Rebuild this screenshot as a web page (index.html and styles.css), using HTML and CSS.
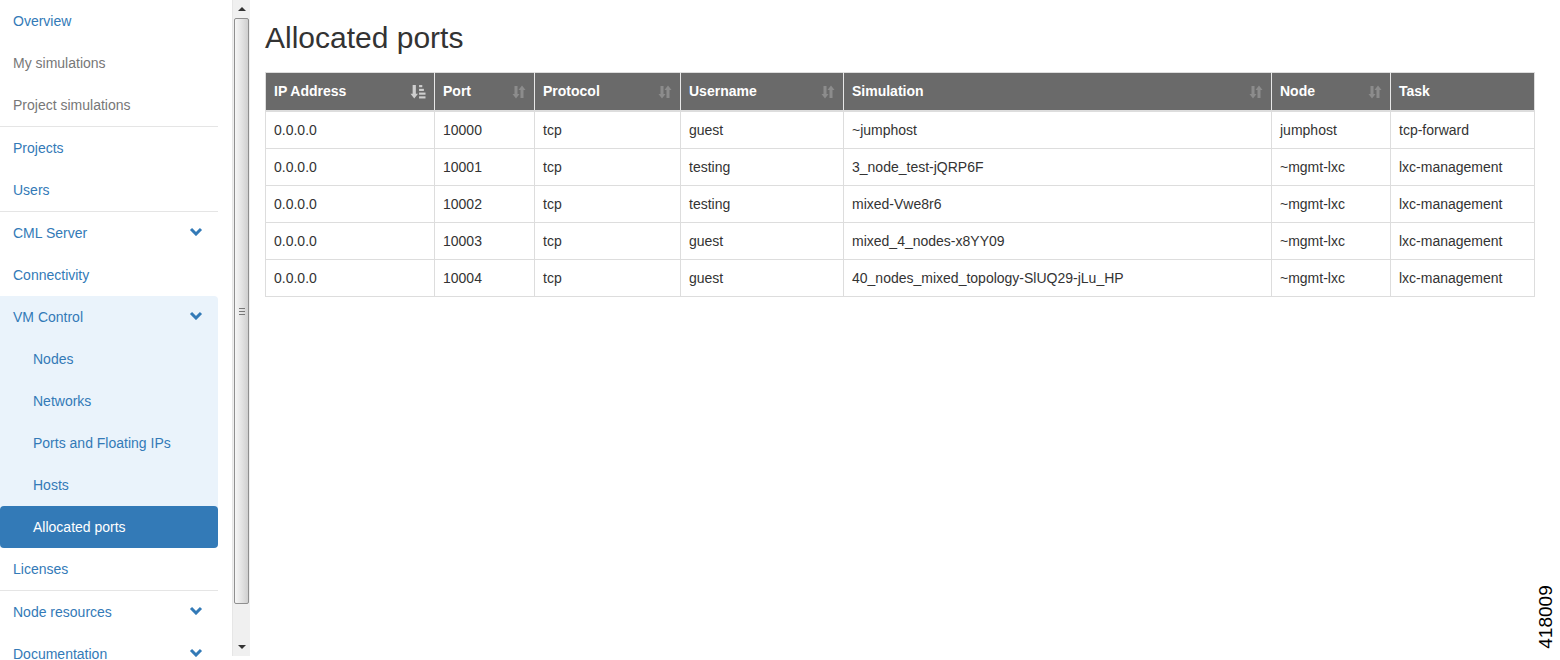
FILE: index.html
```html
<!DOCTYPE html>
<html lang="en">
<head>
  <meta charset="UTF-8" />
  <title>Allocated ports</title>
  <link rel="stylesheet" href="styles.css">
</head>
<body>
  <aside class="sidebar">
    <nav class="menu">
      <a class="item">Overview</a>
      <a class="item muted">My simulations</a>
      <a class="item muted">Project simulations</a>
      <div class="sep"></div>
      <a class="item">Projects</a>
      <a class="item">Users</a>
      <div class="sep"></div>
      <a class="item">CML Server
        <svg class="chev" viewBox="0 0 14 9"><polyline points="2,2 7,7 12,2" /></svg>
      </a>
      <a class="item">Connectivity</a>
      <div class="group">
        <a class="item">VM Control
          <svg class="chev" viewBox="0 0 14 9"><polyline points="2,2 7,7 12,2" /></svg>
        </a>
        <a class="item sub">Nodes</a>
        <a class="item sub">Networks</a>
        <a class="item sub">Ports and Floating IPs</a>
        <a class="item sub">Hosts</a>
        <a class="item sub active">Allocated ports</a>
      </div>
      <a class="item">Licenses</a>
      <div class="sep"></div>
      <a class="item">Node resources
        <svg class="chev" viewBox="0 0 14 9"><polyline points="2,2 7,7 12,2" /></svg>
      </a>
      <a class="item">Documentation
        <svg class="chev" viewBox="0 0 14 9"><polyline points="2,2 7,7 12,2" /></svg>
      </a>
    </nav>

    <div class="scrollbar">
      <div class="arrow up"></div>
      <div class="thumb"><span class="grip"></span></div>
      <div class="arrow down"></div>
    </div>
  </aside>

  <main class="content">
    <h1>Allocated ports</h1>

    <table class="ports">
      <thead>
        <tr>
          <th class="c-ip">IP Address
            <svg class="sort on" viewBox="0 0 14 14">
              <path d="M2 1h3v8h2l-3.5 4.5L0 9h2z" />
              <rect x="8" y="1" width="3" height="2" />
              <rect x="8" y="4.5" width="4.5" height="2" />
              <rect x="8" y="8" width="6" height="2" />
              <rect x="8" y="11.5" width="6" height="2" />
            </svg>
          </th>
          <th class="c-port">Port
            <svg class="sort" viewBox="0 0 14 14"><path d="M2.5 1h3v8h2L4 13.5 0.5 9h2zM8.5 13h3V5h2L10 0.5 6.5 5h2z" /></svg>
          </th>
          <th class="c-proto">Protocol
            <svg class="sort" viewBox="0 0 14 14"><path d="M2.5 1h3v8h2L4 13.5 0.5 9h2zM8.5 13h3V5h2L10 0.5 6.5 5h2z" /></svg>
          </th>
          <th class="c-user">Username
            <svg class="sort" viewBox="0 0 14 14"><path d="M2.5 1h3v8h2L4 13.5 0.5 9h2zM8.5 13h3V5h2L10 0.5 6.5 5h2z" /></svg>
          </th>
          <th class="c-sim">Simulation
            <svg class="sort" viewBox="0 0 14 14"><path d="M2.5 1h3v8h2L4 13.5 0.5 9h2zM8.5 13h3V5h2L10 0.5 6.5 5h2z" /></svg>
          </th>
          <th class="c-node">Node
            <svg class="sort" viewBox="0 0 14 14"><path d="M2.5 1h3v8h2L4 13.5 0.5 9h2zM8.5 13h3V5h2L10 0.5 6.5 5h2z" /></svg>
          </th>
          <th class="c-task">Task</th>
        </tr>
      </thead>
      <tbody>
        <tr><td>0.0.0.0</td><td>10000</td><td>tcp</td><td>guest</td><td>~jumphost</td><td>jumphost</td><td>tcp-forward</td></tr>
        <tr><td>0.0.0.0</td><td>10001</td><td>tcp</td><td>testing</td><td>3_node_test-jQRP6F</td><td>~mgmt-lxc</td><td>lxc-management</td></tr>
        <tr><td>0.0.0.0</td><td>10002</td><td>tcp</td><td>testing</td><td>mixed-Vwe8r6</td><td>~mgmt-lxc</td><td>lxc-management</td></tr>
        <tr><td>0.0.0.0</td><td>10003</td><td>tcp</td><td>guest</td><td>mixed_4_nodes-x8YY09</td><td>~mgmt-lxc</td><td>lxc-management</td></tr>
        <tr><td>0.0.0.0</td><td>10004</td><td>tcp</td><td>guest</td><td>40_nodes_mixed_topology-SlUQ29-jLu_HP</td><td>~mgmt-lxc</td><td>lxc-management</td></tr>
      </tbody>
    </table>
  </main>

  <div class="figno">418009</div>
</body>
</html>
```

FILE: styles.css
```css
html, body {
  height: 100%;
}

body {
  margin: 0;
  font-family: "Liberation Sans", Arial, sans-serif;
  font-size: 14px;
  color: #333;
  background: #fff;
  display: flex;
  overflow: hidden;
}

/* sidebar */

.sidebar {
  display: flex;
  width: 250px;
  height: 660px;
  flex-shrink: 0;
}

.menu {
  width: 218px;
  height: 660px;
  overflow: hidden;
  flex-shrink: 0;
}

.item {
  display: flex;
  align-items: center;
  justify-content: space-between;
  height: 42px;
  box-sizing: border-box;
  padding: 0 15px 0 13px;
  color: #337ab7;
  line-height: 20px;
}

.item.muted {
  color: #777;
}

.item.sub {
  padding-left: 33px;
}

.item.active {
  background: #337ab7;
  color: #fff;
  border-radius: 4px;
}

.sep {
  height: 1px;
  background: #e5e5e5;
}

.group {
  background: #eaf3fb;
  border-radius: 0 4px 4px 0;
}

.chev {
  width: 14px;
  height: 9px;
  margin-top: -3px;
}

.chev polyline {
  fill: none;
  stroke: #337ab7;
  stroke-width: 3;
}

.scrollbar {
  margin-left: 14px;
  width: 18px;
  height: 656px;
  background: #f0f0f0;
  border-left: 1px solid #e6e6e6;
  display: flex;
  flex-direction: column;
}

.arrow {
  height: 17px;
  position: relative;
}

.arrow::after {
  content: "";
  position: absolute;
  left: 5px;
  border-left: 4px solid transparent;
  border-right: 4px solid transparent;
}

.arrow.up::after {
  top: 7px;
  border-bottom: 4px solid #333;
}

.arrow.down::after {
  top: 6px;
  border-top: 4px solid #333;
}

.thumb {
  flex: 1;
  margin: 1px 1px 35px;
  border: 1px solid #8f8f8f;
  border-radius: 2px;
  background: linear-gradient(to right, #f6f6f6, #e2e2e2 55%, #cfcfcf);
  display: flex;
  align-items: center;
  justify-content: center;
}

.grip {
  width: 6px;
  height: 5px;
  border-top: 1px solid #777;
  border-bottom: 1px solid #777;
  position: relative;
}

.grip::after {
  content: "";
  position: absolute;
  left: 0;
  right: 0;
  top: 2px;
  border-top: 1px solid #777;
}

/* content */

.content {
  flex: 1;
  padding: 0 26px 0 15px;
}

h1 {
  margin: 21px 0 18px;
  font-size: 30px;
  font-weight: 500;
  line-height: 33px;
  color: #333;
}

.ports {
  width: 1269px;
  border-collapse: collapse;
  table-layout: fixed;
  border: 1px solid #ddd;
}

.ports th,
.ports td {
  box-sizing: border-box;
  text-align: left;
  padding: 8px 8px;
  line-height: 20px;
  white-space: nowrap;
}

.ports th {
  padding-bottom: 9px;
  background: #6a6a6a;
  color: #fff;
  font-weight: bold;
  border-left: 1px solid #e8e8e8;
  border-bottom: 2px solid #ddd;
  position: relative;
}

.ports th:first-child {
  border-left: none;
}

.ports td {
  border: 1px solid #ddd;
}

.sort {
  position: absolute;
  right: 8px;
  top: 12px;
  width: 14px;
  height: 14px;
  fill: #8c8c8c;
}

.sort.on {
  width: 16px;
  height: 15px;
  top: 11px;
  fill: #cfcfcf;
}

.c-ip { width: 169px; }
.c-port { width: 100px; }
.c-proto { width: 146px; }
.c-user { width: 163px; }
.c-sim { width: 428px; }
.c-node { width: 119px; }
.c-task { width: 144px; }

.figno {
  position: absolute;
  left: 1546px;
  top: 617px;
  transform: translate(-50%, -50%) rotate(-90deg);
  font-size: 19px;
  color: #000;
}
```
